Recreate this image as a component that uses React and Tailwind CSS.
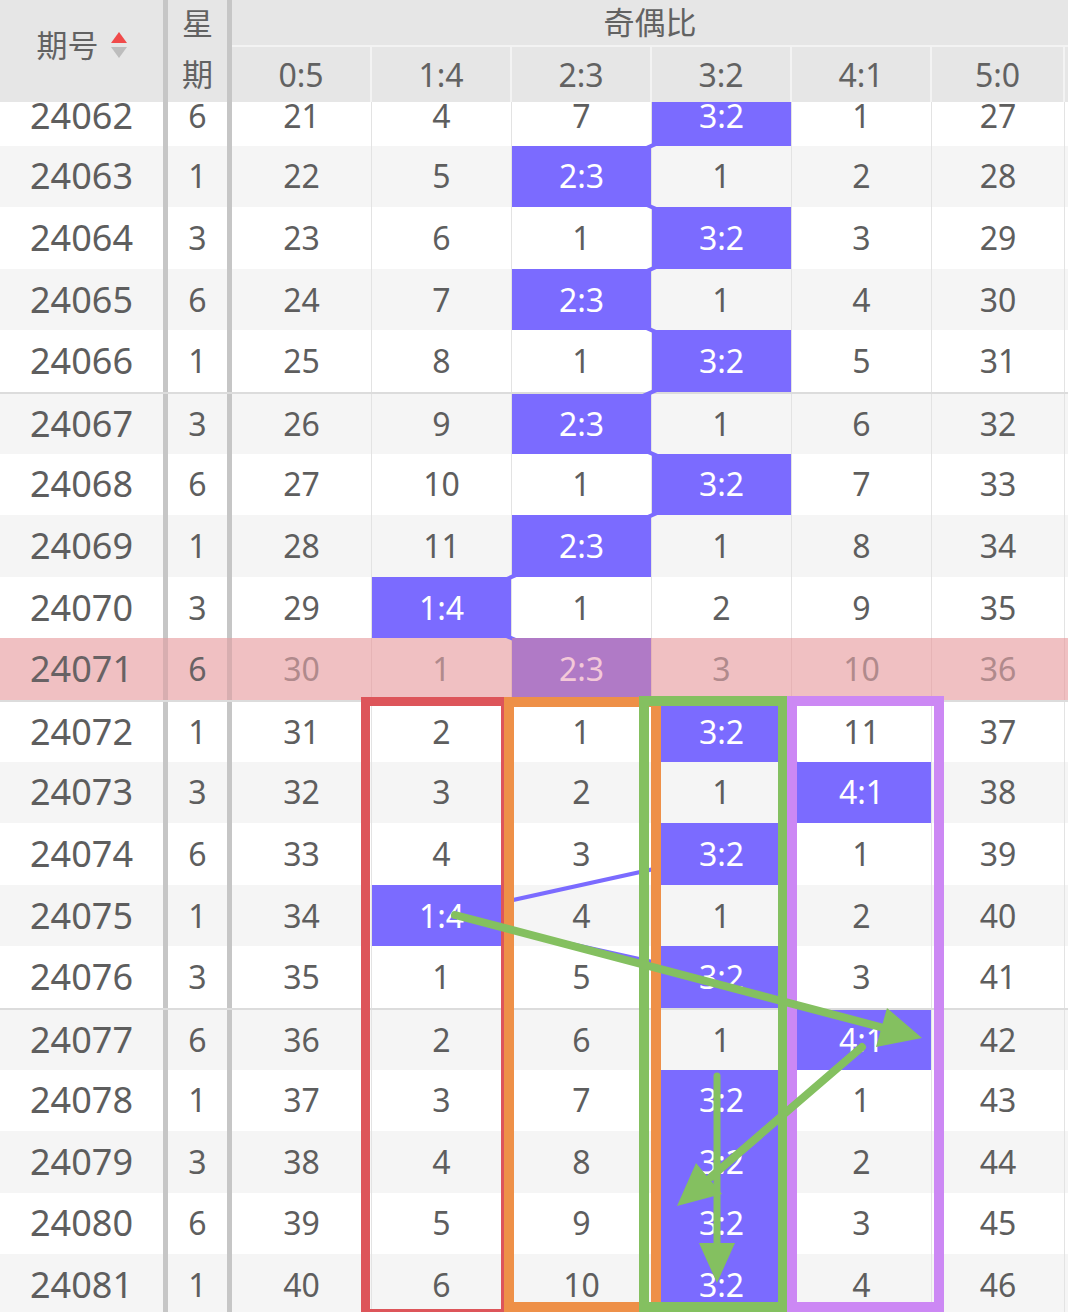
import React from 'react';

const ratios = ['0:5', '1:4', '2:3', '3:2', '4:1', '5:0'];

// each row: issue, weekday, values per ratio column, index of the hit column
const rows = [
  ['24062', 6, [21, 4, 7, 0, 1, 27], 3],
  ['24063', 1, [22, 5, 0, 1, 2, 28], 2],
  ['24064', 3, [23, 6, 1, 0, 3, 29], 3],
  ['24065', 6, [24, 7, 0, 1, 4, 30], 2],
  ['24066', 1, [25, 8, 1, 0, 5, 31], 3],
  ['24067', 3, [26, 9, 0, 1, 6, 32], 2],
  ['24068', 6, [27, 10, 1, 0, 7, 33], 3],
  ['24069', 1, [28, 11, 0, 1, 8, 34], 2],
  ['24070', 3, [29, 0, 1, 2, 9, 35], 1],
  ['24071', 6, [30, 1, 0, 3, 10, 36], 2],
  ['24072', 1, [31, 2, 1, 0, 11, 37], 3],
  ['24073', 3, [32, 3, 2, 1, 0, 38], 4],
  ['24074', 6, [33, 4, 3, 0, 1, 39], 3],
  ['24075', 1, [34, 0, 4, 1, 2, 40], 1],
  ['24076', 3, [35, 1, 5, 0, 3, 41], 3],
  ['24077', 6, [36, 2, 6, 1, 0, 42], 4],
  ['24078', 1, [37, 3, 7, 0, 1, 43], 3],
  ['24079', 3, [38, 4, 8, 0, 2, 44], 3],
  ['24080', 6, [39, 5, 9, 0, 3, 45], 3],
  ['24081', 1, [40, 6, 10, 0, 4, 46], 3],
];

const ROW_H = 61.6;
const HILITE = '24071';

const SortIcon = () => (
  <svg width="16" height="28" viewBox="0 0 16 28" className="ml-3">
    <polygon points="8,1 16,12 0,12" fill="#f04a4a" />
    <polygon points="0,16 16,16 8,27" fill="#bdbdbd" />
  </svg>
);

const Header = () => (
  <div className="relative z-30 flex h-[102px] bg-[#e6e6e6] text-[#626262]">
    <div className="flex w-[163px] items-center justify-center pb-3 text-[31px]">
      期号
      <SortIcon />
    </div>
    <div className="w-[5px] bg-[#c6c6c6]" />
    <div className="flex w-[59px] flex-col text-[31px]">
      <div className="flex h-[47px] items-center justify-center">星</div>
      <div className="flex h-[55px] items-center justify-center">期</div>
    </div>
    <div className="w-[5px] bg-[#c6c6c6]" />
    <div className="flex flex-1 flex-col">
      <div className="flex h-[45px] items-center justify-center text-[31px]">奇偶比</div>
      <div className="h-[2px] bg-[#f3f3f3]" />
      <div className="flex h-[55px] text-[32px]">
        {ratios.map((r, i) => (
          <div
            key={r}
            className={`flex items-center justify-center border-[#f3f3f3] ${i === 5 ? 'w-[133px] border-r-2' : 'w-[140px] border-r-2'}`}
          >
            {r}
          </div>
        ))}
        <div className="flex-1" />
      </div>
    </div>
  </div>
);

const Row = ({ row, idx }) => {
  const [id, wk, vals, hit] = row;
  const pink = id === HILITE;
  const odd = idx % 2 === 1;
  const bg = pink ? 'bg-[#f0c0c2]' : odd ? 'bg-[#f5f5f5]' : 'bg-white';
  const sep = idx % 5 === 0 ? 'border-t-2 border-[#dcdcdc]' : '';
  const divider = pink ? 'bg-[#d8aeb0]' : 'bg-[#c6c6c6]';
  const lineCol = pink ? 'border-[#e6b4b6]' : 'border-[#e3e3e3]';
  return (
    <div className={`flex h-[61.6px] ${bg} ${sep}`}>
      <div className={`flex w-[163px] items-center justify-center text-[36px] ${pink ? 'text-[#686264]' : 'text-[#5e5e5e]'}`}>
        {id}
      </div>
      <div className={`w-[5px] ${divider}`} />
      <div className={`flex w-[59px] items-center justify-center text-[32px] ${pink ? 'text-[#686264]' : 'text-[#5e5e5e]'}`}>
        {wk}
      </div>
      <div className={`w-[5px] ${divider}`} />
      {vals.map((v, i) => {
        const w = i === 5 ? 'w-[133px]' : 'w-[140px]';
        if (i === hit) {
          return (
            <div key={i} className={`${w} border-r ${lineCol}`}>
              <div
                className={`relative z-20 flex h-full items-center justify-center text-[32px] ${pink ? 'bg-[#b07ac6] text-[#f3c8d8]' : 'bg-[#7b6bff] text-white'}`}
              >
                {ratios[i]}
              </div>
            </div>
          );
        }
        return (
          <div
            key={i}
            className={`flex ${w} items-center justify-center border-r text-[32px] ${lineCol} ${pink ? 'text-[#b08a8c]' : 'text-[#5e5e5e]'}`}
          >
            {v}
          </div>
        );
      })}
      <div className="flex-1" />
    </div>
  );
};

const TrendLine = () => {
  const pts = rows
    .map((r, i) => `${302 + 140 * r[3]},${(ROW_H / 2 + ROW_H * i).toFixed(1)}`)
    .join(' ');
  return (
    <svg
      className="pointer-events-none absolute left-0 top-0 z-10"
      width="1068"
      height={rows.length * ROW_H}
    >
      <polyline points={pts} fill="none" stroke="#7b6bff" strokeWidth="4" strokeLinejoin="round" />
    </svg>
  );
};

const Marks = () => {
  const green = '#84c060';
  return (
    <svg className="pointer-events-none absolute left-0 top-0 z-40" width="1068" height="1312">
      <rect x="365.5" y="701.5" width="140" height="612" fill="none" stroke="#dd555a" strokeWidth="9" />
      <rect x="509" y="702" width="147" height="605" fill="none" stroke="#ee9048" strokeWidth="10" />
      <rect x="644" y="701" width="139" height="606" fill="none" stroke={green} strokeWidth="10" />
      <rect x="792" y="701" width="147" height="606" fill="none" stroke="#cc88f4" strokeWidth="10" />

      <line x1="455" y1="915" x2="884" y2="1028" stroke={green} strokeWidth="8" strokeLinecap="round" />
      <polygon points="922,1038 876,1047 887,1008" fill={green} />

      <line x1="862" y1="1047" x2="711" y2="1177" stroke={green} strokeWidth="8" strokeLinecap="round" />
      <polygon points="677,1206 696,1163 722,1194" fill={green} />

      <line x1="717" y1="1076" x2="717" y2="1246" stroke={green} strokeWidth="7" strokeLinecap="round" />
      <polygon points="717,1283 699,1243 735,1243" fill={green} />
    </svg>
  );
};

const App = () => {
  return (
    <div className="relative h-[1312px] w-[1068px] overflow-hidden bg-white font-['Noto_Sans','Noto_Sans_CJK_SC',sans-serif] leading-none">
      <Header />
      <div className="h-[1210px] overflow-hidden">
        <div className="relative -mt-[18px]">
          {rows.map((r, i) => (
            <Row key={r[0]} row={r} idx={i} />
          ))}
          <TrendLine />
        </div>
      </div>
      <Marks />
    </div>
  );
};

export default App;
